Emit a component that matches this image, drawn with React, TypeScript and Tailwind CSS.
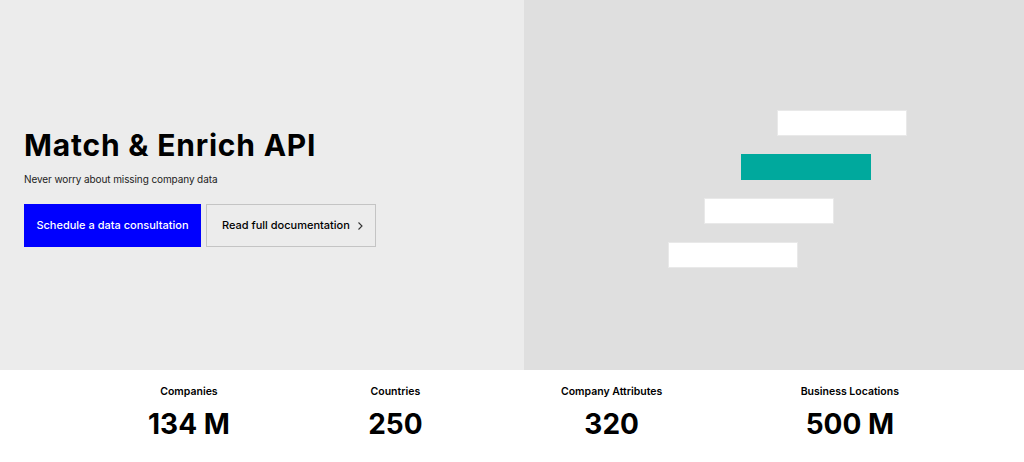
const stats = [
  { label: "Companies", value: "134 M" },
  { label: "Countries", value: "250" },
  { label: "Company Attributes", value: "320" },
  { label: "Business Locations", value: "500 M" },
];

export default function App() {
  return (
    <div className="w-[1024px] h-[462px] bg-white font-['Inter',sans-serif] text-black overflow-hidden">
      <div className="flex h-[370px]">
        <div className="w-[524px] bg-[#ececec] flex flex-col px-6 pt-[125px]">
          <h1 className="text-[30px] leading-[40px] font-bold tracking-[0.8px]">
            Match &amp; Enrich API
          </h1>
          <p className="text-[10px] mt-[7px] text-[#222] tracking-[-0.1px]">
            Never worry about missing company data
          </p>
          <div className="flex gap-[5px] mt-[17px]">
            <button className="w-[177px] h-[43px] bg-[#0000ff] text-white text-[11px] font-medium whitespace-nowrap">
              Schedule a data consultation
            </button>
            <button className="w-[170px] h-[43px] border border-[#c4c4c4] text-[11px] font-medium whitespace-nowrap flex items-center pl-[15px] gap-[6px]">
              Read full documentation
              <svg width="8" height="10" viewBox="0 0 8 10" fill="none" stroke="#333" strokeWidth="1.1">
                <path d="M2.5 1.5 6 5 2.5 8.5" />
              </svg>
            </button>
          </div>
        </div>
        <div className="flex-1 bg-[#dfdfdf] flex flex-col gap-[18px] pt-[110px]">
          <div className="w-[130px] h-[26px] bg-white border border-[#e9e9e9] ml-[253px]" />
          <div className="w-[130px] h-[26px] bg-[#00a99d] ml-[217px]" />
          <div className="w-[130px] h-[26px] bg-white border border-[#e9e9e9] ml-[180px]" />
          <div className="w-[130px] h-[26px] bg-white border border-[#e9e9e9] ml-[144px]" />
        </div>
      </div>
      <div className="flex justify-between pl-[148px] pr-[125px] pt-[14px]">
        {stats.map((s) => (
          <div key={s.label} className="flex flex-col items-center">
            <span className="text-[10.5px] font-semibold">{s.label}</span>
            <span className="text-[28px] font-bold leading-[36px] mt-[6px]">{s.value}</span>
          </div>
        ))}
      </div>
    </div>
  );
}
